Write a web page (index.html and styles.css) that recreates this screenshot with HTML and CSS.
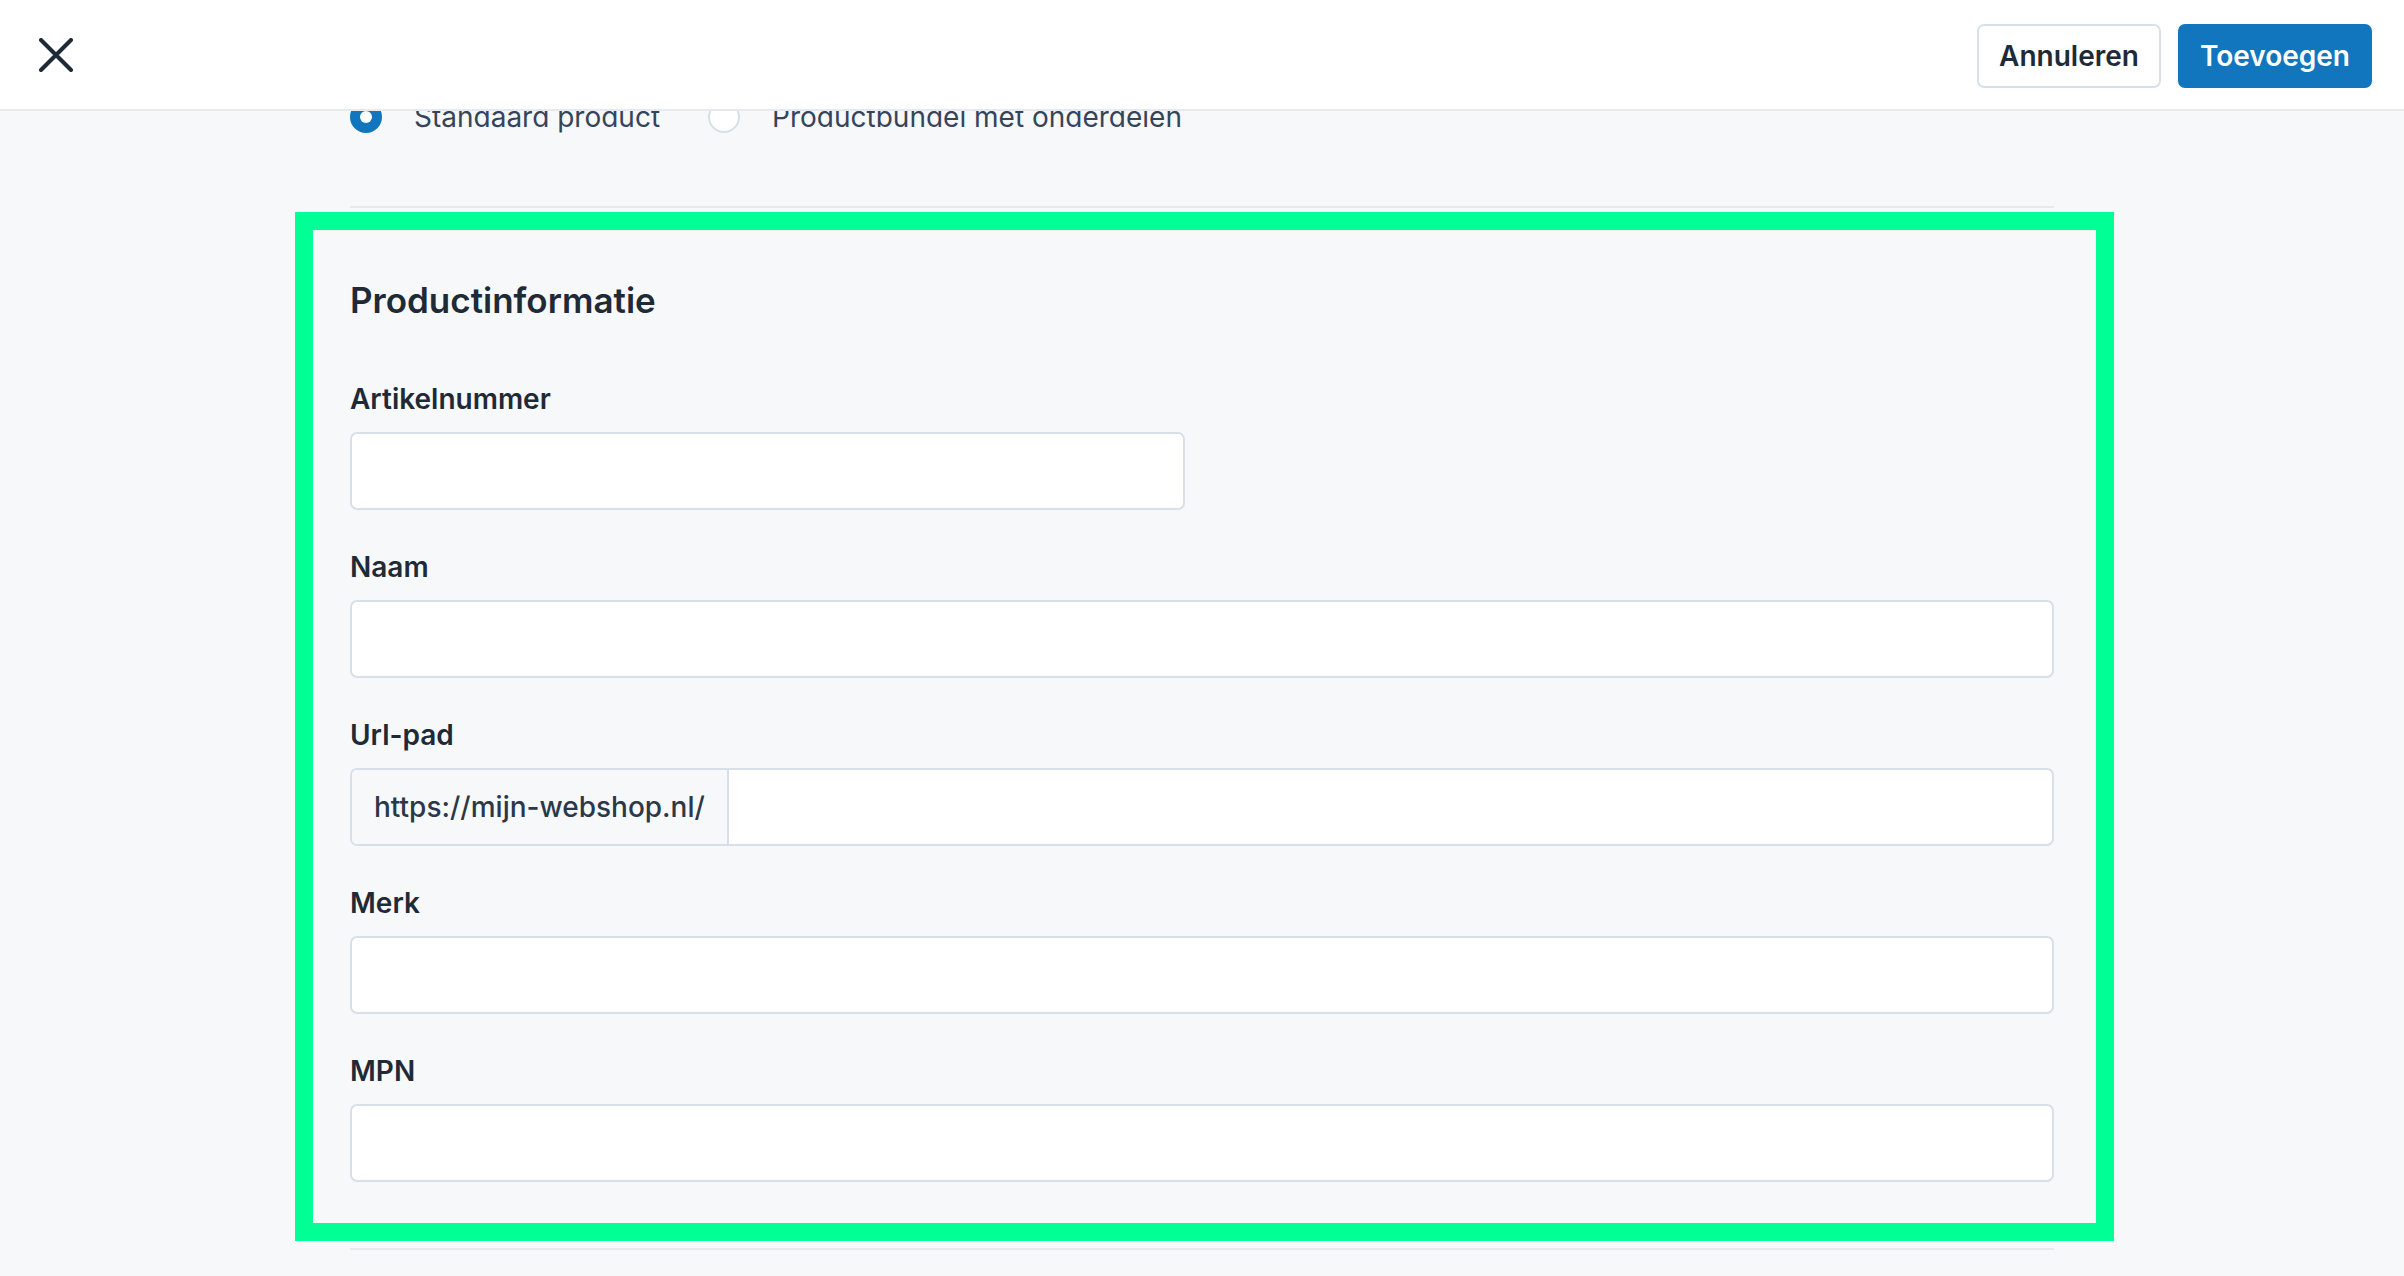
FILE: index.html
```html
<!DOCTYPE html>
<html lang="nl">
<head>
<meta charset="utf-8">
<title>Product toevoegen</title>
<link rel="stylesheet" href="styles.css">
</head>
<body>
<header class="topbar">
  <button class="close-btn" aria-label="Sluiten">
    <svg width="34" height="34" viewBox="0 0 34 34" aria-hidden="true">
      <path d="M2 2 L32 32 M32 2 L2 32" stroke="#1e2a38" stroke-width="4" stroke-linecap="round" fill="none"/>
    </svg>
  </button>
  <div class="actions">
    <button class="btn btn-secondary">Annuleren</button>
    <button class="btn btn-primary">Toevoegen</button>
  </div>
</header>
<main class="viewport">
  <div class="column">
    <div class="radio-row">
      <label class="radio-item"><span class="radio radio-on"></span><span class="radio-text">Standaard product</span></label>
      <label class="radio-item"><span class="radio"></span><span class="radio-text">Productbundel met onderdelen</span></label>
    </div>
    <section class="section">
      <div class="highlight"></div>
      <h2 class="section-title">Productinformatie</h2>
      <div class="fields">
        <div class="field">
          <div class="field-label">Artikelnummer</div>
          <div class="input input-half"></div>
        </div>
        <div class="field">
          <div class="field-label">Naam</div>
          <div class="input"></div>
        </div>
        <div class="field">
          <div class="field-label">Url-pad</div>
          <div class="input input-group">
            <span class="prefix">https://mijn-webshop.nl/</span>
            <span class="group-rest"></span>
          </div>
        </div>
        <div class="field">
          <div class="field-label">Merk</div>
          <div class="input"></div>
        </div>
        <div class="field">
          <div class="field-label">MPN</div>
          <div class="input"></div>
        </div>
      </div>
    </section>
  </div>
</main>
</body>
</html>
```
FILE: styles.css
```css
* { box-sizing: border-box; }
html, body {
  margin: 0;
  padding: 0;
  height: 100%;
}
body {
  background: #f7f8fa;
  font-family: "Inter", "Liberation Sans", sans-serif;
  color: #1f2a37;
  overflow: hidden;
}
.topbar {
  height: 111px;
  background: #ffffff;
  border-bottom: 2px solid #e6eaef;
  display: flex;
  align-items: center;
  justify-content: space-between;
  padding: 0 32px 0 39px;
  position: relative;
  z-index: 2;
}
.close-btn {
  border: 0;
  background: transparent;
  padding: 0;
  width: 34px;
  height: 34px;
  display: flex;
  cursor: pointer;
  margin-top: 1px;
}
.actions {
  display: flex;
  gap: 17px;
  margin-top: 2px;
}
.btn {
  height: 64px;
  border-radius: 7px;
  font-family: "Inter", "Liberation Sans", sans-serif;
  font-size: 28px;
  font-weight: 600;
  padding: 0 20px;
  cursor: pointer;
  letter-spacing: 0;
}
.btn-secondary {
  background: #ffffff;
  border: 2px solid #d8e1e9;
  color: #1f2a37;
}
.btn-primary {
  background: #1176bd;
  border: 2px solid #1176bd;
  color: #ffffff;
  padding: 0 20px;
}
.viewport {
  height: 1165px;
  overflow: hidden;
}
.column {
  width: 1704px;
  margin: -10px auto 0;
}
.radio-row {
  display: flex;
  align-items: center;
  gap: 48px;
  height: 32px;
}
.radio-item {
  display: flex;
  align-items: center;
  gap: 32px;
}
.radio {
  width: 32px;
  height: 32px;
  border-radius: 50%;
  background: #ffffff;
  border: 2px solid #d8e0e7;
  display: flex;
  align-items: center;
  justify-content: center;
  flex: none;
}
.radio-on {
  background: #1176bd;
  border-color: #1176bd;
}
.radio-on::after {
  content: "";
  width: 12px;
  height: 12px;
  border-radius: 50%;
  background: #ffffff;
}
.radio-text {
  font-size: 28px;
  font-weight: 400;
  color: #36445a;
  line-height: 32px;
}
.section {
  position: relative;
  margin-top: 73px;
  border-top: 2px solid #e6eaef;
  border-bottom: 2px solid #e6eaef;
  padding: 72px 0 66px;
}
.highlight {
  position: absolute;
  left: -55px;
  right: -60px;
  top: 4px;
  bottom: 7px;
  border: 18px solid #00ff95;
  pointer-events: none;
}
.section-title {
  margin: 0;
  font-size: 35px;
  font-weight: 600;
  line-height: 40px;
  color: #1f2a37;
}
.fields {
  margin-top: 63px;
  display: flex;
  flex-direction: column;
  gap: 41px;
}
.field {
  display: flex;
  flex-direction: column;
  gap: 17px;
}
.field-label {
  font-size: 28px;
  font-weight: 600;
  line-height: 32px;
  color: #1f2a37;
}
.input {
  height: 78px;
  background: #ffffff;
  border: 2px solid #d7e0e8;
  border-radius: 7px;
}
.input-half {
  width: 835px;
}
.input-group {
  display: flex;
  overflow: hidden;
}
.prefix {
  display: flex;
  align-items: center;
  padding: 0 22px;
  background: #f7f8fa;
  border-right: 2px solid #d7e0e8;
  font-size: 28px;
  font-weight: 500;
  color: #2b3849;
}
.group-rest {
  flex: 1;
}
```
